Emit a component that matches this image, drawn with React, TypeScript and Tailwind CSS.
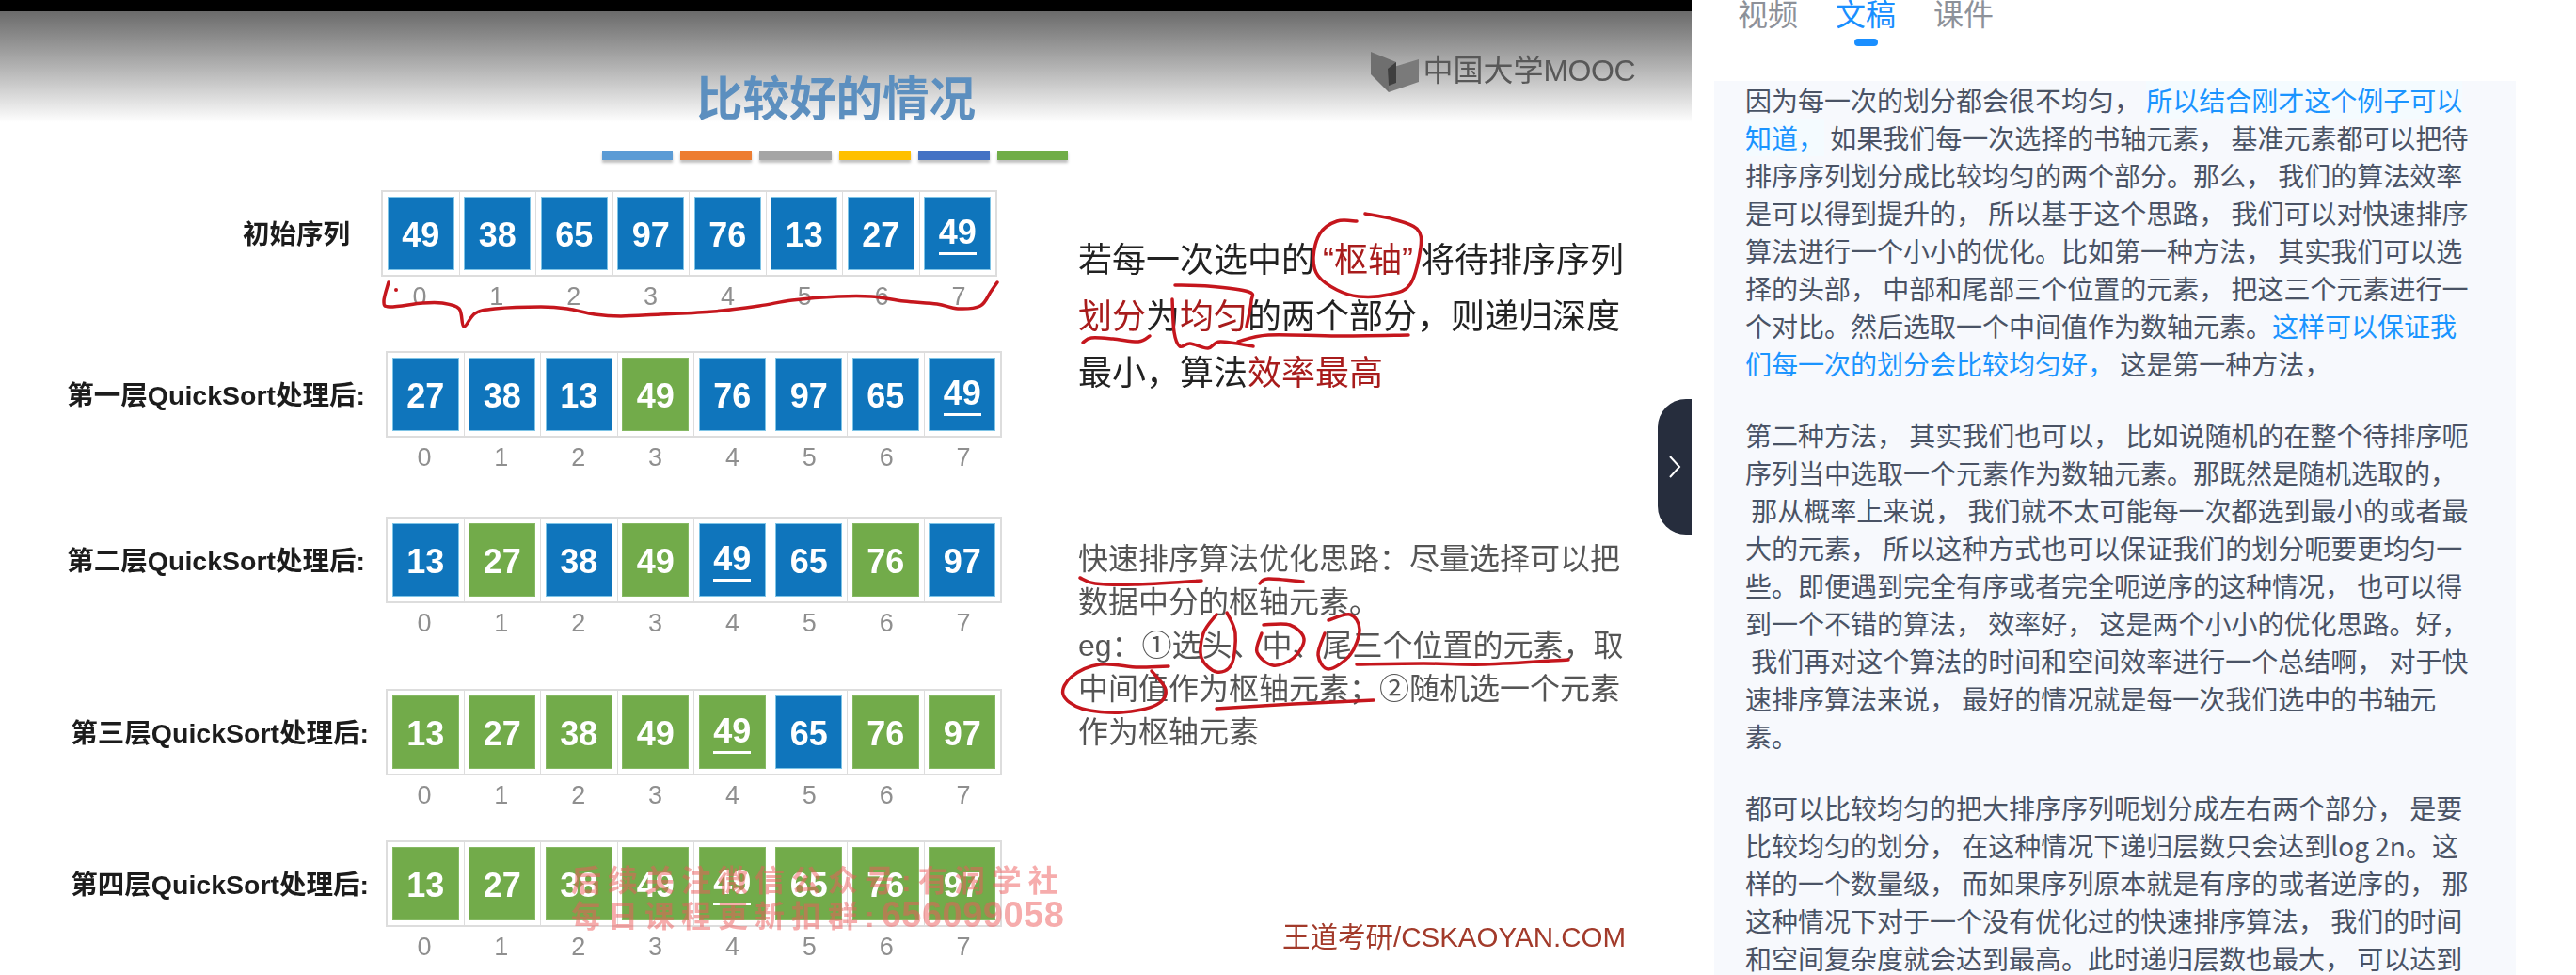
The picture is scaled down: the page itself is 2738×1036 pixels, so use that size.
import { FC } from "react";

const B = "bg-[#0f75bc]";
const G = "bg-[#72ab4a]";

// 全角标点
const fw = (s: string) => s.replace(/,/g, "\uFF0C").replace(/;/g, "\uFF1B").replace(/:/g, "\uFF1A");

type Cell = { v: number; green?: boolean; line?: boolean };

const mk = (vals: number[], greens: number[], line: number): Cell[] =>
  vals.map((v, i) => ({ v, green: greens.includes(i), line: i === line }));

const rows = [
  { label: "初始序列", wrap: "mt-[32px]", labelW: "w-[372px]", gap: "ml-[33px]", cells: mk([49, 38, 65, 97, 76, 13, 27, 49], [], 7) },
  { label: "第一层QuickSort处理后:", wrap: "mt-[43px]", labelW: "w-[388px]", gap: "ml-[22px]", cells: mk([27, 38, 13, 49, 76, 97, 65, 49], [3], 7) },
  { label: "第二层QuickSort处理后:", wrap: "mt-[48px]", labelW: "w-[388px]", gap: "ml-[22px]", cells: mk([13, 27, 38, 49, 49, 65, 76, 97], [1, 3, 6], 4) },
  { label: "第三层QuickSort处理后:", wrap: "mt-[55px]", labelW: "w-[392px]", gap: "ml-[18px]", cells: mk([13, 27, 38, 49, 49, 65, 76, 97], [0, 1, 2, 3, 4, 6, 7], 4) },
  { label: "第四层QuickSort处理后:", wrap: "mt-[33px]", labelW: "w-[392px]", gap: "ml-[18px]", cells: mk([13, 27, 38, 49, 49, 65, 76, 97], [0, 1, 2, 3, 4, 5, 6, 7], 4) },
];

const bars = [
  "w-[75px] bg-[#5b9bd5]",
  "w-[76px] bg-[#ed7d31]",
  "w-[77px] bg-[#a5a5a5]",
  "w-[76px] bg-[#ffc000]",
  "w-[76px] bg-[#4472c4]",
  "w-[75px] bg-[#70ad47]",
];

// 字幕: [text, 1 = blue, 2 = blue + highlight]
type Seg = [string, number?];
const paras: Seg[][][] = [
  [
    [["因为每一次的划分都会很不均匀, "], ["所以结合刚才这个例子可以", 2]],
    [["知道,", 2], [" 如果我们每一次选择的书轴元素, 基准元素都可以把待"]],
    [["排序序列划分成比较均匀的两个部分。那么, 我们的算法效率"]],
    [["是可以得到提升的, 所以基于这个思路, 我们可以对快速排序"]],
    [["算法进行一个小小的优化。比如第一种方法, 其实我们可以选"]],
    [["择的头部, 中部和尾部三个位置的元素, 把这三个元素进行一"]],
    [["个对比。然后选取一个中间值作为数轴元素。"], ["这样可以保证我", 1]],
    [["们每一次的划分会比较均匀好,", 1], [" 这是第一种方法,"]],
  ],
  [
    [["第二种方法, 其实我们也可以, 比如说随机的在整个待排序呃"]],
    [["序列当中选取一个元素作为数轴元素。那既然是随机选取的,"]],
    [[" 那从概率上来说, 我们就不太可能每一次都选到最小的或者最"]],
    [["大的元素, 所以这种方式也可以保证我们的划分呃要更均匀一"]],
    [["些。即便遇到完全有序或者完全呃逆序的这种情况, 也可以得"]],
    [["到一个不错的算法, 效率好, 这是两个小小的优化思路。好,"]],
    [[" 我们再对这个算法的时间和空间效率进行一个总结啊, 对于快"]],
    [["速排序算法来说, 最好的情况就是每一次我们选中的书轴元"]],
    [["素。"]],
  ],
  [
    [["都可以比较均匀的把大排序序列呃划分成左右两个部分, 是要"]],
    [["比较均匀的划分, 在这种情况下递归层数只会达到log 2n。这"]],
    [["样的一个数量级, 而如果序列原本就是有序的或者逆序的, 那"]],
    [["这种情况下对于一个没有优化过的快速排序算法, 我们的时间"]],
    [["和空间复杂度就会达到最高。此时递归层数也最大, 可以达到"]],
  ],
];

// 手写批注
const ink: [number, number][][] = [
  [[413, 300], [408, 320], [414, 326], [449, 322], [470, 322], [488, 328], [493, 347], [505, 333], [526, 328], [575, 326], [603, 328], [632, 334], [660, 336], [702, 334], [758, 331], [807, 325], [842, 319], [891, 315], [926, 315], [961, 320], [996, 323], [1018, 328], [1042, 325], [1053, 310], [1060, 300]],
  [[1442, 235], [1421, 235], [1403, 248], [1396, 273], [1401, 293], [1421, 308], [1444, 315], [1476, 313], [1499, 302], [1510, 263], [1506, 243], [1481, 233], [1451, 227]],
  [[1151, 364], [1160, 359], [1183, 360], [1210, 363], [1222, 357]],
  [[1249, 303], [1284, 304], [1327, 310], [1330, 320], [1325, 347]],
  [[1246, 318], [1248, 353], [1254, 368], [1265, 365], [1284, 370], [1297, 363], [1332, 368]],
  [[1316, 363], [1348, 356], [1421, 357], [1497, 356]],
  [[1148, 614], [1164, 620], [1206, 621], [1277, 617]],
  [[1339, 620], [1348, 615], [1385, 618]],
  [[1293, 653], [1279, 673], [1277, 699], [1293, 714], [1309, 706], [1313, 673], [1304, 651]],
  [[1343, 664], [1371, 664], [1386, 679], [1375, 699], [1353, 707], [1336, 693], [1341, 673]],
  [[1412, 659], [1435, 653], [1445, 669], [1435, 696], [1412, 711], [1401, 696], [1408, 673]],
  [[1442, 706], [1513, 705], [1578, 706], [1667, 701]],
  [[1242, 708], [1210, 709], [1169, 706], [1139, 719], [1130, 738], [1150, 753], [1192, 757], [1229, 749], [1239, 733], [1224, 713]],
  [[1293, 753], [1375, 748], [1460, 744]],
];

const toPath = (p: [number, number][]) => {
  let d = `M${p[0][0]} ${p[0][1]}`;
  for (let i = 0; i < p.length - 1; i++) {
    const a = p[Math.max(i - 1, 0)];
    const b = p[i];
    const c = p[i + 1];
    const e = p[Math.min(i + 2, p.length - 1)];
    d += ` C${b[0] + (c[0] - a[0]) / 6} ${b[1] + (c[1] - a[1]) / 6} ${c[0] - (e[0] - b[0]) / 6} ${c[1] - (e[1] - b[1]) / 6} ${c[0]} ${c[1]}`;
  }
  return d;
};

const Row: FC<(typeof rows)[number]> = ({ label, wrap, labelW, gap, cells }) => (
  <div className={wrap}>
    <div className="flex items-center">
      <div className={`${labelW} shrink-0 pt-[3px] text-right text-[28.5px] font-bold leading-none text-[#1c1c1c] whitespace-nowrap`}>
        {label}
      </div>
      <div className={`${gap} flex h-[92px] w-[655px] border-2 border-[#dddddd]`}>
        {cells.map((c, i) => (
          <div key={i} className="flex flex-1 items-center justify-center border-l border-[#dddddd] first:border-l-0">
            <div
              className={`flex h-[78px] w-[71px] items-center justify-center border border-[#7ec4e6] pt-[3px] text-[36px] font-bold leading-none text-white ${c.green ? `${G} border-[#86b964]` : B}`}
            >
              <span className={c.line ? "border-b-[3px] border-white pb-[3px]" : ""}>{c.v}</span>
            </div>
          </div>
        ))}
      </div>
    </div>
    <div className="mt-[6px] flex h-[30px]">
      <div className={`${labelW} shrink-0`} />
      <div className={`${gap} flex w-[655px]`}>
        {cells.map((_, i) => (
          <span key={i} className="flex-1 text-center text-[27px] leading-[30px] text-[#8f8f8f]">
            {i}
          </span>
        ))}
      </div>
    </div>
  </div>
);

const Slide: FC = () => (
  <div className="relative h-[1036px] w-[1798px] shrink-0 overflow-hidden bg-white font-['Liberation_Sans','Noto_Sans_CJK_SC',sans-serif]">
    <div className="blur-[0.5px]">
      <div className="h-3 bg-black" />
      <div className="flex h-[118px] items-start justify-between bg-gradient-to-b from-[#6b6b6b] to-white pl-[740px] pr-[60px]">
        <h1 className="mt-[66px] text-[49.5px] font-bold leading-[56px] text-[#5c8fbf]">比较好的情况</h1>
        <div className="mt-[43px] flex items-start">
          <svg width="52" height="44" viewBox="0 0 52 44">
            <polygon points="0,0 27,11 19,43 0,24" fill="#6f6f6f" />
            <polygon points="51,8 51,32 19,43 18,18" fill="#7a7a7a" />
            <polygon points="27,11 18,18 19,36 27,33" fill="#3f3f3f" />
          </svg>
          <span className="ml-[3px] mt-[2px] text-[32px] leading-[36px] text-[#585858]">
            中国大学<span className="tracking-[-0.5px]">MOOC</span>
          </span>
        </div>
      </div>
      <div className="mt-[30px] flex h-[10px] gap-[8px] pl-[640px]">
        {bars.map((b, i) => (
          <div key={i} className={`${b} shadow-[0_3px_3px_rgba(0,0,0,0.25)]`} />
        ))}
      </div>

      <div className="flex">
        <div className="w-[1146px] shrink-0">
          {rows.map((r) => (
            <Row key={r.label} {...r} />
          ))}
        </div>
        <div className="flex-1">
          <div className="mt-[77px] text-[36px] leading-[60px] text-[#222222] whitespace-nowrap">
            <div>
              若每一次选中的
              <span className="text-[#a81c1c]">
                <span className="ml-[8px]">“</span>枢轴<span className="mr-[8px]">”</span>
              </span>
              将待排序序列
            </div>
            <div>
              <span className="text-[#a81c1c]">划分</span>为<span className="text-[#a81c1c]">均匀</span>
              {fw("的两个部分,则递归深度")}
            </div>
            <div>
              {fw("最小,算法")}
              <span className="text-[#a81c1c]">效率最高</span>
            </div>
          </div>
          <div className="mt-[144px] text-[32px] leading-[46px] text-[#555555] whitespace-nowrap">
            <div>{fw("快速排序算法优化思路:尽量选择可以把")}</div>
            <div>数据中分的枢轴元素。</div>
            <div>{fw("eg:①选头、中、尾三个位置的元素,取")}</div>
            <div>{fw("中间值作为枢轴元素;②随机选一个元素")}</div>
            <div>作为枢轴元素</div>
          </div>
          <div className="mt-[177px] pl-[217px] text-[29.5px] leading-[36px] text-[#a23a2a] whitespace-nowrap">
            王道考研/CSKAOYAN.COM
          </div>
        </div>
      </div>

      {/* 水印 */}
      <div className="absolute left-[607px] top-[918px] text-[32px] font-bold leading-[36px] text-[#ee5a5a]/50 whitespace-nowrap">
        <div className="tracking-[7px]">后续关注微信公众号:有润学社</div>
        <div className="tracking-[7px]">
          每日课程更新扣群:<span className="text-[38px] tracking-[0.5px]">656099058</span>
        </div>
      </div>

      <svg className="absolute left-0 top-0" width="1798" height="1036" fill="none">
        {ink.map((p, i) => (
          <path key={i} d={toPath(p)} stroke="#c5161d" strokeWidth="3.5" strokeLinecap="round" strokeLinejoin="round" />
        ))}
        <circle cx="421" cy="308" r="2" fill="#c5161d" />
      </svg>
    </div>

    <div className="absolute right-0 top-[424px] flex h-[144px] w-9 items-center justify-center rounded-l-[30px] bg-[#262d3d]">
      <svg width="14" height="26" viewBox="0 0 14 26" fill="none">
        <polyline points="2,2 12,13 2,24" stroke="white" strokeWidth="2" />
      </svg>
    </div>
  </div>
);

const tabs = ["视频", "文稿", "课件"];

const Transcript: FC = () => (
  <div className="h-[1036px] flex-1 overflow-hidden bg-white font-['Noto_Sans_CJK_SC','Noto_Sans',sans-serif]">
    <div className="-mt-[3px] flex gap-[40px] pl-[49px]">
      {tabs.map((t, i) => (
        <div key={t} className="flex flex-col items-center">
          <span className={`text-[32px] leading-[32px] ${i === 1 ? "text-[#1a8fff]" : "text-[#8d9199]"}`}>{t}</span>
          <span className={`mt-[12px] h-2 w-[25px] rounded-full ${i === 1 ? "bg-[#1a8fff]" : ""}`} />
        </div>
      ))}
    </div>
    <div className="ml-[24px] mt-[37px] h-[950px] w-[852px] bg-[#f7f9fd] pl-[33px] text-[28px] leading-[40px] text-[#4a5365]">
      {paras.map((p, pi) => (
        <div key={pi} className={pi > 0 ? "mt-[36px]" : ""}>
          {p.map((line, li) => (
            <div key={li} className="whitespace-pre">
              {line.map((s, si) => (
                <span key={si} className={s[1] === 2 ? "bg-[#f4fbff] text-[#1a94ff]" : s[1] === 1 ? "text-[#1a94ff]" : ""}>
                  {fw(s[0])}
                </span>
              ))}
            </div>
          ))}
        </div>
      ))}
    </div>
  </div>
);

export default function App() {
  return (
    <div className="flex h-[1036px] w-[2738px] overflow-hidden bg-white">
      <Slide />
      <Transcript />
    </div>
  );
}
